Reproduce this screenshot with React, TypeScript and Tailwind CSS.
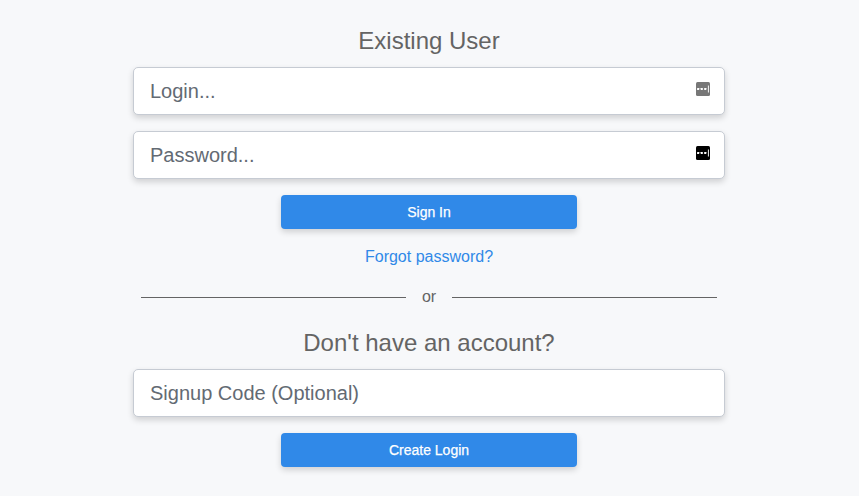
const inputClass =
  "h-12 w-full rounded-[5px] border border-[#c6cbd3] bg-white px-4 text-[20px] leading-[30px] text-[#495057] shadow-[0_3px_6px_rgba(0,0,0,0.16)] outline-none placeholder:text-[#636a73] placeholder:opacity-100";

function KeyIcon({ color }: { color: string }) {
  return (
    <svg className="absolute top-[15px] right-[15px] h-[14px] w-[14px]" viewBox="0 0 14 14">
      <rect width="14" height="14" rx="1.5" fill={color} />
      <g fill="#fff">
        <rect x="1.1" y="6" width="2.1" height="2" rx="0.2" />
        <rect x="4.7" y="6" width="2.1" height="2" rx="0.2" />
        <rect x="8.2" y="6" width="2.1" height="2" rx="0.2" />
        <rect x="11.9" y="3.5" width="1.1" height="7" opacity="0.85" />
      </g>
    </svg>
  );
}

function Field({ placeholder, type = "text", icon }: { placeholder: string; type?: string; icon?: string }) {
  return (
    <div className="relative mb-4 w-full">
      <input type={type} placeholder={placeholder} className={inputClass} />
      {icon && <KeyIcon color={icon} />}
    </div>
  );
}

function Button({ label }: { label: string }) {
  return (
    <button className="block h-[34px] w-[296px] rounded-[4px] bg-[#3089e8] text-[14px] leading-[21px] text-white shadow-[0_3px_6px_rgba(0,0,0,0.16)] [-webkit-text-stroke:0.25px_white]">
      {label}
    </button>
  );
}

export default function App() {
  return (
    <main className="flex h-[496px] w-[859px] flex-col items-center overflow-hidden bg-[#f7f8fa] pt-[26px] pr-px font-['Liberation_Sans',Arial,sans-serif] text-[16px] leading-6 text-[#646464]">
      <div className="flex w-[592px] flex-col items-center">
        <h1 className="mb-3 text-[24px] leading-[29px]">Existing User</h1>
        <Field placeholder="Login..." icon="#777777" />
        <Field placeholder="Password..." type="password" icon="#000000" />
        <Button label="Sign In" />
        <a href="#" className="mt-4 text-[#3089e8]">Forgot password?</a>
        <div className="mt-4 flex w-[576px] items-center gap-4">
          <span className="h-px flex-1 bg-[#646464]" />
          <span>or</span>
          <span className="h-px flex-1 bg-[#646464]" />
        </div>
        <h2 className="mt-[19px] mb-3 text-[24px] leading-[29px]">Don't have an account?</h2>
        <Field placeholder="Signup Code (Optional)" />
        <Button label="Create Login" />
      </div>
    </main>
  );
}
